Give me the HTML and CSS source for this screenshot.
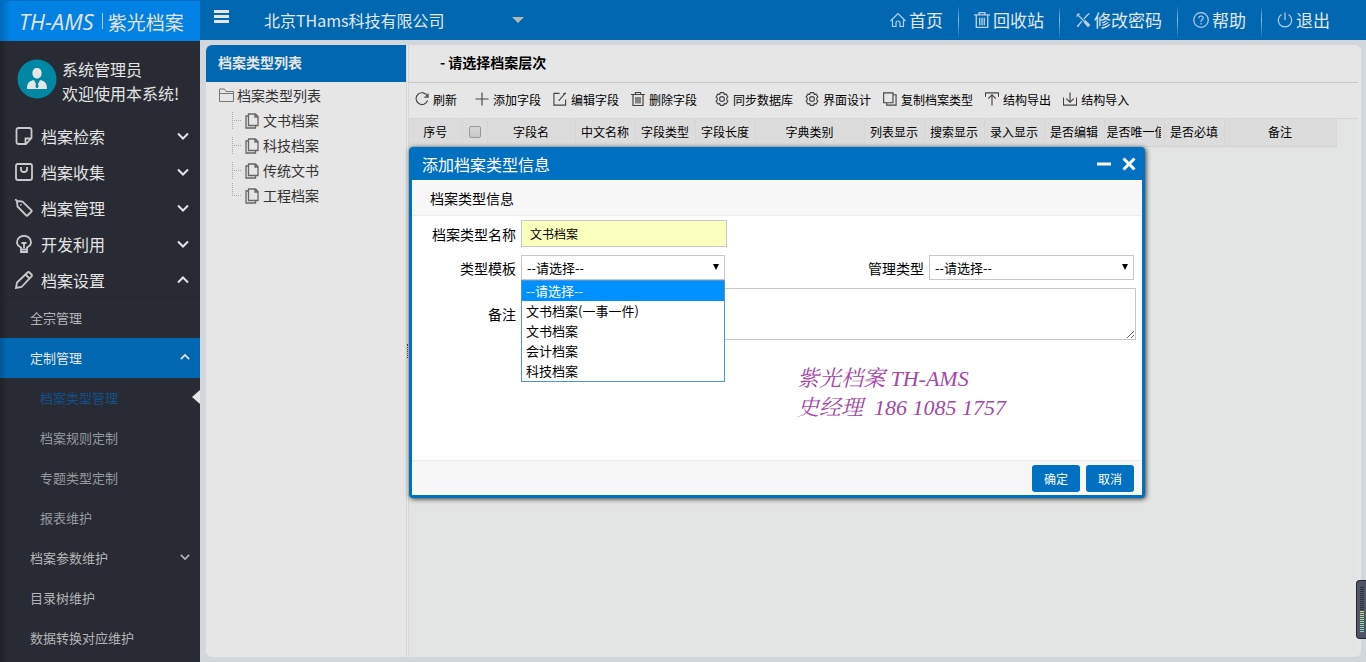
FILE: index.html
```html
<!DOCTYPE html>
<html lang="zh-CN">
<head>
<meta charset="utf-8">
<title>TH-AMS 紫光档案</title>
<link rel="stylesheet" href="styles.css">
</head>
<body>
<svg class="sprite" aria-hidden="true">
  <symbol id="down" viewBox="0 0 12 12"><path d="M1 3.5l5 5 5-5"/></symbol>
  <symbol id="up" viewBox="0 0 12 12"><path d="M1 8.5l5-5 5 5"/></symbol>
  <symbol id="trash" viewBox="0 0 14 14"><path d="M0 2.5h14M4.5 2V.5h5V2M2 3v10.5h10V3M5 5v6.5M7 5v6.5M9 5v6.5"/></symbol>
  <symbol id="gear" viewBox="0 0 15 15"><circle cx="7.5" cy="7.5" r="2.6"/><path d="M5.8.7h3.4l.8 1.8 2-.2 1.8 3-1.2 1.4v1.6l1.2 1.4-1.8 3-2-.2-.8 1.8H5.800l-.8-1.800-2 .2-1.800-3 1.200-1.400V6.700L1.200 5.300l1.800-3 2 .2z"/></symbol>
  <symbol id="pages" viewBox="0 0 14 16"><path d="M3.500 1h7L13 3.500V12.500H3.500zM3 3H1v12h9.500V13M10 1v3h3"/></symbol>
</svg>
<div class="app">
  <aside class="sidebar">
    <a class="logo" href="#"><em class="logo-en">TH-AMS</em><span class="logo-bar"></span><span>紫光档案</span></a>
    <div class="user">
      <svg class="avatar" viewBox="0 0 40 40"><circle cx="20" cy="20" r="19.500" fill="#0087a3"/><path d="M20 9c3 0 4.600 2 4.600 5s-1.600 5.500-4.600 5.500-4.600-2.500-4.600-5.500S17 9 20 9z" fill="#e6e6e6"/><path d="M10 30c0-6 2-8 7-9l3 6 3-6c5 1 7 3 7 9z" fill="#e6e6e6"/><path d="M18.500 21h3l-.8 1.500.8 5.500-1.500 1.500-1.500-1.500.8-5.500z" fill="#0087a3"/></svg>
      <p class="user-text">系统管理员<br>欢迎使用本系统!</p>
    </div>
    <nav>
      <ul class="menu">
        <li><a class="item" href="#"><svg class="mi" viewBox="0 0 18 18"><path d="M3.500 1h11Q16.500 1 16.500 3v8L11 17H3.500Q1.500 17 1.500 15V3Q1.500 1 3.500 1zM10.500 17v-5.500h6"/></svg>档案检索<svg class="chev"><use href="#down"/></svg></a></li>
        <li><a class="item" href="#"><svg class="mi" viewBox="0 0 18 18"><path d="M2.500 1h13Q17 1 17 3v12Q17 17 15 17H3Q1 17 1 15V3Q1 1 2.500 1zM6 4v2.500Q6 9 9 9t3-2.500V4"/></svg>档案收集<svg class="chev"><use href="#down"/></svg></a></li>
        <li><a class="item" href="#"><svg class="mi" viewBox="0 0 18 18"><path d="M0 0l2.500 2.500M2 2l5.500.5 9 8.800Q17 12 16.500 12.500l-4 4Q12 17 11.300 16.500L2.500 7.500zM5.500 5.500l.8.800"/></svg>档案管理<svg class="chev"><use href="#down"/></svg></a></li>
        <li><a class="item" href="#"><svg class="mi" viewBox="0 0 18 18"><path d="M6 12.500C3 11 2 9.500 2 7.300a7 6.500 0 0 1 14 0c0 2.200-1 3.700-4 5.200v4.500H6zM6 14.500h6M6.500 8h5M9 8v5"/></svg>开发利用<svg class="chev"><use href="#down"/></svg></a></li>
        <li><a class="item" href="#"><svg class="mi" viewBox="0 0 18 18"><path d="M1 17l1-5.500L12.500 1.500q1-1 2 0l2 2q1 1 0 2L6.500 16zM10.500 3.500l4 4"/></svg>档案设置<svg class="chev"><use href="#up"/></svg></a>
          <ul class="sub">
            <li><a class="sub-item" href="#">全宗管理</a></li>
            <li><a class="sub-item open" href="#">定制管理<svg class="chev-s"><use href="#up"/></svg></a>
              <ul class="leafs">
                <li><a class="leaf current" href="#">档案类型管理</a></li>
                <li><a class="leaf" href="#">档案规则定制</a></li>
                <li><a class="leaf" href="#">专题类型定制</a></li>
                <li><a class="leaf" href="#">报表维护</a></li>
              </ul>
            </li>
            <li><a class="sub-item" href="#">档案参数维护<svg class="chev-s"><use href="#down"/></svg></a></li>
            <li><a class="sub-item" href="#">目录树维护</a></li>
            <li><a class="sub-item" href="#">数据转换对应维护</a></li>
          </ul>
        </li>
      </ul>
    </nav>
  </aside>
  <div class="main">
    <header class="topbar">
      <button class="burger" type="button" aria-label="菜单"><span></span><span></span><span></span></button>
      <button class="company" type="button">北京THams科技有限公司<span class="caret"></span></button>
      <nav class="links">
        <a href="#"><svg viewBox="0 0 16 16"><path d="M.5 9L8 1.500 15.500 9M2.500 8v6.500H6V11q0-2 2-2t2 2v3.500h3.500V8"/></svg>首页</a>
        <a href="#"><svg viewBox="0 0 14 14"><use href="#trash"/></svg>回收站</a>
        <a href="#"><svg viewBox="0 0 16 16"><path d="M13.500 2L8.800 7M7 9l-4.500 5.500M2 2l12 12M1.500 4.500L4.500 1.500M10 8.500l5 5M9 10l4.500 5M2 14l2 .5M11 4l3.500-2.500"/></svg>修改密码</a>
        <a href="#"><svg viewBox="0 0 16 16"><circle cx="8" cy="8" r="7.300"/><path d="M5.800 6.300Q5.800 4 8 4t2.200 2q0 1-1.200 1.800T8 9.800M8 11v1.500"/></svg>帮助</a>
        <a href="#"><svg viewBox="0 0 16 16"><path d="M8 .5V8M4.500 2.500a6.700 6.700 0 1 0 7 0"/></svg>退出</a>
      </nav>
    </header>
    <div class="work">
      <section class="tree">
        <h2 class="tree-title">档案类型列表</h2>
        <div class="root"><svg class="folder" viewBox="0 0 15 14"><path d="M.5 13.500V1h5l1.500 2.500h7.500v10zM.500 5.500h14"/></svg><span>档案类型列表</span></div>
        <ul class="nodes">
          <li><svg><use href="#pages"/></svg>文书档案</li>
          <li><svg><use href="#pages"/></svg>科技档案</li>
          <li><svg><use href="#pages"/></svg>传统文书</li>
          <li><svg><use href="#pages"/></svg>工程档案</li>
        </ul>
      </section>
      <div class="splitter"><span class="grip"></span></div>
      <section class="content">
        <h1 class="level">- 请选择档案层次</h1>
        <div class="toolbar">
          <button type="button" class="gap-after"><svg viewBox="0 0 15 15"><path d="M13.200 4.500A6.300 6.300 0 1 0 13.500 9M14 1.500v4h-4"/></svg>刷新</button>
          <button type="button"><svg viewBox="0 0 15 15"><path d="M7.500.5v14M.5 7.500h14"/></svg>添加字段</button>
          <button type="button"><svg viewBox="0 0 15 15"><path d="M7 1.500H1v12.500h12.500V8M6 9.500L13 1.500M11 2l3-1"/></svg>编辑字段</button>
          <button type="button" class="gap-after"><svg viewBox="0 0 14 14"><use href="#trash"/></svg>删除字段</button>
          <button type="button"><svg viewBox="0 0 15 15"><use href="#gear"/></svg>同步数据库</button>
          <button type="button"><svg viewBox="0 0 15 15"><use href="#gear"/></svg>界面设计</button>
          <button type="button"><svg viewBox="0 0 15 15"><path d="M.7 1h10v10.500H.7zM11 3h3v11H4v-2"/></svg>复制档案类型</button>
          <button type="button"><svg viewBox="0 0 15 15"><path d="M.5 5V1h14v4M7.500 14.500V3M3.500 7l4-4 4 4"/></svg>结构导出</button>
          <button type="button"><svg viewBox="0 0 15 15"><path d="M.5 6v8h14V6M7.500.5v10.500M3.500 7l4 4 4-4"/></svg>结构导入</button>
        </div>
        <div class="grid">
          <table class="fields">
            <colgroup><col class="w53"><col class="w25"><col class="w88"><col class="w60"><col class="w60"><col class="w60"><col class="w109"><col class="w60"><col class="w60"><col class="w60"><col class="w60"><col class="w60"><col class="w60"><col class="w112"></colgroup>
            <thead><tr><th>序号</th><th><input type="checkbox" class="check" aria-label="全选"></th><th>字段名</th><th>中文名称</th><th>字段类型</th><th>字段长度</th><th>字典类别</th><th>列表显示</th><th>搜索显示</th><th>录入显示</th><th>是否编辑</th><th><div class="cut">是否唯一值</div></th><th>是否必填</th><th>备注</th></tr></thead>
          </table>
        </div>
        <div class="dialog" role="dialog" aria-labelledby="dlg-title">
          <div class="dlg-head">
            <h2 id="dlg-title">添加档案类型信息</h2>
            <button type="button" aria-label="最小化"><svg viewBox="0 0 14 14"><path d="M0 7h14"/></svg></button>
            <button type="button" aria-label="关闭"><svg viewBox="0 0 14 14"><path d="M1.500 1.500l11 11M12.500 1.500l-11 11"/></svg></button>
          </div>
          <form class="dlg-body">
            <h3 class="legend">档案类型信息</h3>
            <div class="form">
              <div class="row">
                <label for="name">档案类型名称</label>
                <input class="text" id="name" type="text" value="文书档案">
              </div>
              <div class="row">
                <label for="tpl">类型模板</label>
                <div class="select-box">
                  <select id="tpl"><option>--请选择--</option><option>文书档案(一事一件)</option><option>文书档案</option><option>会计档案</option><option>科技档案</option></select>
                  <span class="arrow"></span>
                  <ul class="options"><li class="chosen">--请选择--</li><li>文书档案(一事一件)</li><li>文书档案</li><li>会计档案</li><li>科技档案</li></ul>
                </div>
                <label class="second" for="mgmt">管理类型</label>
                <div class="select-box">
                  <select id="mgmt"><option>--请选择--</option></select>
                  <span class="arrow"></span>
                </div>
              </div>
              <div class="row">
                <label for="memo">备注</label>
                <textarea id="memo"></textarea>
              </div>
              <p class="contact">紫光档案 TH-AMS<br>史经理&nbsp; 186 1085 1757</p>
            </div>
            <div class="dlg-foot">
              <button type="submit">确定</button>
              <button type="button">取消</button>
            </div>
          </form>
        </div>
      </section>
    </div>
  </div>
  <div class="meter" aria-hidden="true"><span></span></div>
</div>
</body>
</html>
```
FILE: styles.css
```css
* { box-sizing: border-box; }
body, h1, h2, h3, p, ul { margin: 0; padding: 0; }
ul { list-style: none; }
a { color: inherit; text-decoration: none; }
body, button, input, select, textarea { font-family: "Noto Sans CJK SC", "Noto Sans", sans-serif; }
body { background: #d2d7db; color: #000; font-size: 14px; }
button { border: 0; padding: 0; background: none; color: inherit; white-space: nowrap; }
svg { fill: none; stroke: currentColor; flex: none; }
.sprite { position: absolute; width: 0; height: 0; }
.app { display: grid; grid-template-columns: 200px 1fr; height: 100vh; overflow: hidden; position: relative; }

.sidebar { background: linear-gradient(90deg, rgba(0,0,0,.2), rgba(0,0,0,0) 8px), #282b33; color: #e4e4e4; }
.logo { display: flex; align-items: center; height: 41px; padding-left: 19px; background: linear-gradient(90deg, #0069b8, #0081e3 10px); border-top: 1px solid #006dc0; font-size: 19px; white-space: nowrap; }
.logo-en { font-family: "Open Sans", sans-serif; font-size: 22px; }
.logo-bar { width: 1px; height: 16px; margin: 0 5px 0 8px; background: #a4cdf0; }
.user { display: flex; align-items: center; gap: 5px; height: 76px; padding-left: 17px; }
.avatar { width: 40px; height: 40px; stroke: none; }
.user-text { font-size: 16px; line-height: 24px; padding-top: 4px; white-space: nowrap; }
.item { display: flex; align-items: center; height: 36px; padding: 1px 11px 0 15px; font-size: 16px; }
.mi { width: 18px; height: 18px; margin-right: 8px; stroke: #c9cacb; stroke-width: 1.8; }
.chev { width: 12px; height: 12px; margin-left: auto; stroke-width: 2; }
.chev-s { width: 10px; height: 10px; margin-left: auto; stroke-width: 2; }
.sub { border-top: 1px solid #24272e; }
.sub-item, .leaf { display: flex; align-items: center; height: 40px; padding: 0 10px 2px 30px; font-size: 13px; color: #b4b5b7; }
.open { background: linear-gradient(90deg, #005590, #0067b0 6px); color: #e6e6e6; }
.leaf { padding-left: 40px; color: #949a9f; }
.current { color: #11508a; justify-content: space-between; padding-right: 0; }
.current::after { content: ""; border: solid transparent; border-width: 7px 8px 7px 0; border-right-color: #e6e6e6; }

.main { display: flex; flex-direction: column; min-width: 0; }
.topbar { display: flex; align-items: center; height: 40px; padding: 0 20px 0 14px; background: #0067b0; color: #e2e7eb; flex: none; }
.burger { display: grid; gap: 2px; width: 15px; margin-bottom: 7px; }
.burger span { height: 3px; background: #e2e7eb; }
.company { display: flex; align-items: center; gap: 67px; margin-left: 35px; font-size: 16px; }
.caret { border: solid transparent; border-width: 6px 6px 0; border-top-color: #b8b8b3; }
.links { display: flex; margin-left: auto; font-size: 17px; }
.links a { display: flex; align-items: center; gap: 3px; height: 40px; padding: 0 15px 1px; }
.links a:last-child { padding-right: 16px; }
.links a + a { border-left: 1px solid; border-image: linear-gradient(#0067b0 15%, #8dbbe0 50%, #0067b0 95%) 1; }
.links svg { width: 16px; height: 16px; stroke: #b7d0e5; stroke-width: 1.2; }

.work { display: grid; grid-template-columns: 200px 3px 1fr; flex: 1; margin: 5px 5px 5px 6px; min-height: 0; }
.tree { background: #e6e6e6; border-radius: 6px 0 0 6px; color: #333; }
.tree-title { height: 37px; padding-left: 12px; background: #0067b0; border-radius: 6px 0 0 0; color: #e6e6e6; font-size: 14px; line-height: 35px; }
.root { display: flex; align-items: center; gap: 3px; height: 26px; padding-left: 13px; }
.folder { width: 15px; height: 14px; stroke: #777; }
.nodes { margin-left: 26px; }
.nodes li { display: grid; grid-template-columns: 9px 14px auto; align-items: center; justify-content: start; column-gap: 4px; height: 25px; line-height: 25px; }
.nodes li::before { content: ""; height: 17px; border-left: 1px dotted #aaa; background: repeating-linear-gradient(90deg, transparent 0 1px, #aaa 1px 2px) center / 100% 1px no-repeat; }
.nodes li:last-child::before { align-self: start; height: 13px; background-position: bottom; }
.nodes svg { width: 14px; height: 16px; stroke: #666; stroke-width: 1.3; }
.splitter { display: grid; place-items: center; background: #e9e9e9; border: solid #d6d6d6; border-width: 0 1px; }
.grip { width: 1px; height: 14px; border-left: 1px dotted #444; }
.content { position: relative; min-width: 0; display: flex; flex-direction: column; background: #e6e6e6; border-radius: 0 6px 6px 0; }
.level { height: 38px; margin-right: 3px; padding-left: 31px; border-bottom: 1px solid #c8c8c8; font-size: 14px; line-height: 35px; }
.toolbar { display: flex; gap: 12px; height: 35px; padding: 0 6px 3px; align-items: center; }
.toolbar button { display: flex; align-items: center; gap: 4px; font-size: 12px; }
.toolbar svg { width: 14px; height: 14px; stroke: #444; stroke-width: 1.2; }
.toolbar .gap-after { margin-right: 6px; }
.grid { flex: 1; margin-right: 3px; background: #e3e5e4; border-top: 1px solid #d5d7d7; border-radius: 0 0 6px; }
.fields { width: 927px; table-layout: fixed; border-collapse: collapse; background: #dcdcdc; }
.fields th { height: 27px; padding: 0; border-right: 1px solid #d6d6d6; border-bottom: 1px solid #d2d2d2; font-size: 12px; line-height: 24px; font-weight: 400; white-space: nowrap; overflow: hidden; }
.cut { margin: 0 3px 0 2px; overflow: hidden; text-align: left; }
.check { appearance: none; display: block; width: 12px; height: 12px; margin: 0 auto; border: 1px solid #999; border-radius: 2px; background: linear-gradient(#d8d8d8, #c8c8c8); }
.w53 { width: 53px; } .w25 { width: 25px; } .w88 { width: 88px; } .w60 { width: 60px; } .w109 { width: 109px; } .w112 { width: 112px; }

.dialog { position: absolute; left: 0; top: 102px; width: 736px; border: 3px solid #0070c1; border-top: 0; border-radius: 4px; background: #fff; box-shadow: 1px 1px 5px #333; }
.dlg-head { display: flex; align-items: center; gap: 11px; height: 33px; padding: 1px 6px 0 10px; background: #0070c1; color: #fff; }
.dlg-head h2 { margin-right: auto; font-size: 16px; font-weight: 400; line-height: 32px; }
.dlg-head button, .dlg-head svg { display: block; width: 14px; height: 14px; }
.dlg-head svg { stroke-width: 3; }
.legend { height: 36px; padding-left: 18px; border-top: 1px solid #fff; border-bottom: 1px solid #ececec; background: #f7f7f7; font-size: 14px; font-weight: 400; line-height: 34px; }
.form { display: flex; flex-direction: column; gap: 8px; height: 244px; padding: 4px 6px 0 5px; }
.row { display: flex; align-items: center; }
.row label { width: 99px; margin-right: 5px; text-align: right; flex: none; }
.row .second { margin-left: auto; }
.text { width: 206px; height: 27px; padding: 0 8px; border: 1px solid #c8c8c8; background: #faffbd; font-size: 12px; }
.select-box { position: relative; display: grid; width: 204px; height: 25px; }
.second + .select-box { width: 205px; margin-right: 2px; }
.select-box select { grid-area: 1 / 1; appearance: none; border: 1px solid #c8c8c8; border-radius: 0; padding: 0 5px; background: #fff; color: #000; font-size: 13px; }
.arrow { grid-area: 1 / 1; place-self: center end; margin: 0 6px 2px 0; border: solid transparent; border-width: 6px 3px 0; border-top-color: #000; pointer-events: none; }
.options { position: absolute; z-index: 2; left: 0; right: 0; top: 25px; border: 1px solid #5095d5; background: #fff; }
.options li { height: 20px; padding-left: 4px; font-size: 13px; line-height: 20px; }
.options .chosen { background: #0090ff; color: #fff; }
.row textarea { flex: 1; height: 52px; border: 1px solid #c8c8c8; background: #fff; }
.contact { align-self: flex-end; margin: 16px 130px 0 0; color: #a348a4; font-family: "Liberation Serif", "Noto Serif CJK SC", "Noto Sans CJK SC", serif; font-size: 22px; font-style: italic; line-height: 29px; }
.dlg-foot { display: flex; justify-content: flex-end; gap: 6px; height: 35px; padding: 4px 8px 3px 0; border-top: 1px solid #ececec; background: #f7f7f7; }
.dlg-foot button { width: 48px; border-radius: 3px; background: #0070c1; color: #fff; font-size: 12px; }
.meter { position: absolute; right: 0; top: 580px; width: 10px; height: 59px; padding: 6px 2px 6px 3px; border: 1px solid #222730; border-right: 0; border-radius: 4px 0 0 4px; background: #4f5566; }
.meter span { display: block; width: 4px; height: 46px; background: repeating-linear-gradient(transparent 0 1px, #4f5566 1px 2px), linear-gradient(#2c3039 50%, #d5df81 50%, #68d6c7); }
```
